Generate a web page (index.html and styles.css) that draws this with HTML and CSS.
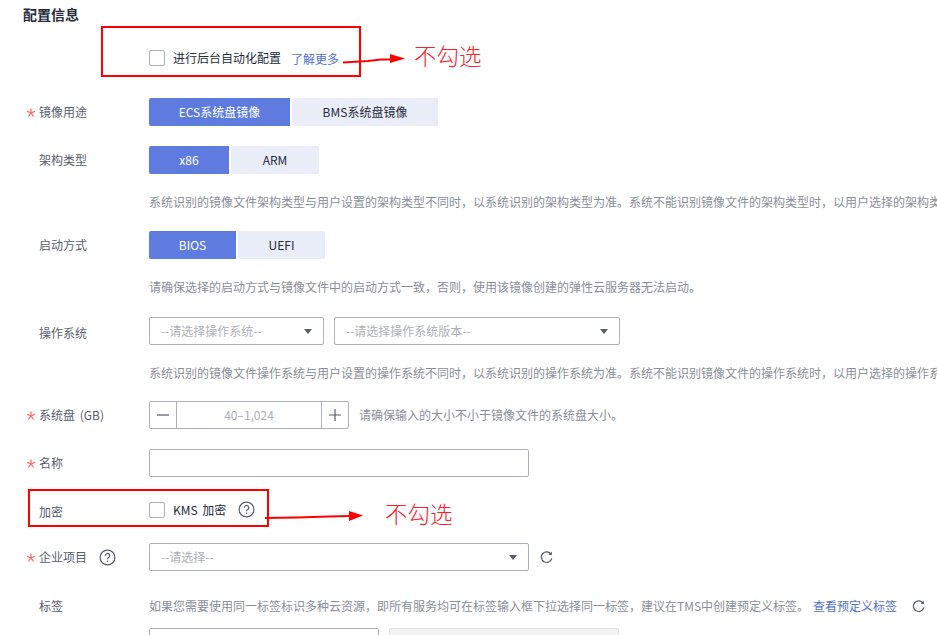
FILE: index.html
```html
<!DOCTYPE html>
<html lang="zh-CN">
<head>
<meta charset="utf-8">
<title>配置信息</title>
<link rel="stylesheet" href="styles.css">
</head>
<body>
<main class="page">
  <h2 class="title">配置信息</h2>

  <div class="row auto-row">
    <span class="label"></span>
    <span class="checkbox"></span>
    <span class="check-text">进行后台自动化配置</span>
    <a class="link learn">了解更多</a>
  </div>

  <div class="row usage-row">
    <span class="label"><span class="star"><svg width="8" height="9" viewBox="0 0 8 9"><path d="M4 4.800V.5M4 4.800L8 3.300M4 4.800L6.600 8.500M4 4.800L1.400 8.500M4 4.800L0 3.300" stroke="#fa6e6e" stroke-width="1.300" fill="none"/></svg></span>镜像用途</span>
    <div class="seg">
      <span class="seg-btn on w141">ECS系统盘镜像</span>
      <span class="seg-btn w146">BMS系统盘镜像</span>
    </div>
  </div>

  <div class="row gap20">
    <span class="label"><span class="star"></span>架构类型</span>
    <div class="seg">
      <span class="seg-btn on w80">x86</span>
      <span class="seg-btn w88">ARM</span>
    </div>
  </div>
  <p class="hint">系统识别的镜像文件架构类型与用户设置的架构类型不同时，以系统识别的架构类型为准。系统不能识别镜像文件的架构类型时，以用户选择的架构类型为准。</p>

  <div class="row gap20">
    <span class="label"><span class="star"></span>启动方式</span>
    <div class="seg">
      <span class="seg-btn on w87">BIOS</span>
      <span class="seg-btn w87">UEFI</span>
    </div>
  </div>
  <p class="hint">请确保选择的启动方式与镜像文件中的启动方式一致，否则，使用该镜像创建的弹性云服务器无法启动。</p>

  <div class="row gap21">
    <span class="label low"><span class="star"></span>操作系统</span>
    <div class="select w175"><span>--请选择操作系统--</span><b class="caret"></b></div>
    <div class="select w286 ml10"><span>--请选择操作系统版本--</span><b class="caret"></b></div>
  </div>
  <p class="hint">系统识别的镜像文件操作系统与用户设置的操作系统不同时，以系统识别的操作系统为准。系统不能识别镜像文件的操作系统时，以用户选择的操作系统为准。</p>

  <div class="row gap19">
    <span class="label wide-space"><span class="star"><svg width="8" height="9" viewBox="0 0 8 9"><path d="M4 4.800V.5M4 4.800L8 3.300M4 4.800L6.600 8.500M4 4.800L1.400 8.500M4 4.800L0 3.300" stroke="#fa6e6e" stroke-width="1.300" fill="none"/></svg></span>系统盘 (GB)</span>
    <div class="stepper">
      <span class="step">
        <svg width="14" height="14" viewBox="0 0 14 14"><path d="M1 7h12" stroke="#575d6c" stroke-width="1.200"/></svg>
      </span>
      <span class="step-value">40–1,024</span>
      <span class="step">
        <svg width="14" height="14" viewBox="0 0 14 14"><path d="M1 7h12M7 1v12" stroke="#575d6c" stroke-width="1.200"/></svg>
      </span>
    </div>
    <span class="step-note">请确保输入的大小不小于镜像文件的系统盘大小。</span>
  </div>

  <div class="row gap20">
    <span class="label"><span class="star"><svg width="8" height="9" viewBox="0 0 8 9"><path d="M4 4.800V.5M4 4.800L8 3.300M4 4.800L6.600 8.500M4 4.800L1.400 8.500M4 4.800L0 3.300" stroke="#fa6e6e" stroke-width="1.300" fill="none"/></svg></span>名称</span>
    <div class="input w380"></div>
  </div>

  <div class="row kms-row">
    <span class="label low"><span class="star"></span>加密</span>
    <span class="checkbox"></span>
    <span class="check-text wide-space">KMS 加密</span>
    <svg class="help kms-help" width="17" height="17" viewBox="0 0 17 17"><circle cx="8.500" cy="8.500" r="7.400" fill="none" stroke="#575d6c" stroke-width="1.200"/><path d="M6.300 6.700a2.200 2.200 0 1 1 3.300 1.900c-.7.4-1.100.8-1.100 1.700" fill="none" stroke="#575d6c" stroke-width="1.200"/><circle cx="8.500" cy="12.200" r=".8" fill="#575d6c"/></svg>
  </div>

  <div class="row gap23">
    <span class="label"><span class="star"><svg width="8" height="9" viewBox="0 0 8 9"><path d="M4 4.800V.5M4 4.800L8 3.300M4 4.800L6.600 8.500M4 4.800L1.400 8.500M4 4.800L0 3.300" stroke="#fa6e6e" stroke-width="1.300" fill="none"/></svg></span>企业项目<svg class="help label-help" width="17" height="17" viewBox="0 0 17 17"><circle cx="8.500" cy="8.500" r="7.400" fill="none" stroke="#575d6c" stroke-width="1.200"/><path d="M6.300 6.700a2.200 2.200 0 1 1 3.300 1.900c-.7.4-1.100.8-1.100 1.700" fill="none" stroke="#575d6c" stroke-width="1.200"/><circle cx="8.500" cy="12.200" r=".8" fill="#575d6c"/></svg></span>
    <div class="select w380"><span>--请选择--</span><b class="caret"></b></div>
    <svg class="refresh ml11" width="13" height="13" viewBox="0 0 13 13"><path d="M11.200 3.400A5.300 5.300 0 1 0 11.800 7.500" fill="none" stroke="#575d6c" stroke-width="1.200"/><path d="M8.600 3.900h3.300V.6z" fill="#575d6c"/></svg>
  </div>

  <div class="row tags-row">
    <span class="label"><span class="star"></span>标签</span>
    <span class="hint-inline">如果您需要使用同一标签标识多种云资源，即所有服务均可在标签输入框下拉选择同一标签，建议在TMS中创建预定义标签。</span>
    <a class="link tag-link">查看预定义标签</a>
    <svg class="refresh ml15" width="13" height="13" viewBox="0 0 13 13"><path d="M11.200 3.400A5.300 5.300 0 1 0 11.800 7.500" fill="none" stroke="#575d6c" stroke-width="1.200"/><path d="M8.600 3.900h3.300V.6z" fill="#575d6c"/></svg>
  </div>

  <div class="row gap13">
    <span class="label"></span>
    <div class="input w230"></div>
    <div class="input w230 ml10 disabled"></div>
  </div>
</main>

<div class="note-box box-auto"></div>
<div class="note-box box-kms"></div>
<svg class="arrows" width="937" height="635" viewBox="0 0 937 635">
  <path d="M343 62.500L368 61L381 59.500L392 59.500" fill="none" stroke="#f00" stroke-width="2"/>
  <path d="M390 54L405 58.500L390 63z" fill="#f00"/>
  <path d="M265 518L297 517.500L329 516.500L350 516" fill="none" stroke="#f00" stroke-width="2"/>
  <path d="M349 511L363 515.500L349 521z" fill="#f00"/>
</svg>
<span class="note-text text-auto">不勾选</span>
<span class="note-text text-kms">不勾选</span>
</body>
</html>
```
FILE: styles.css
```css
html, body {
  margin: 0;
  height: 635px;
  overflow: hidden;
  background: #fff;
}
body {
  position: relative;
  font: 12px/18px "Noto Sans CJK SC", "Liberation Sans", sans-serif;
  color: #575d6c;
}
.page {
  padding: 4px 0 0 27px;
}
.title {
  margin: 0 0 0 -4px;
  font-size: 14px;
  line-height: 20px;
  font-weight: 700;
  color: #252b3a;
}
.row {
  display: flex;
  align-items: center;
  white-space: nowrap;
}
.auto-row { margin-top: 26px; height: 16px; }
.usage-row { margin-top: 32px; }
.kms-row { margin-top: 23px; height: 20px; }
.tags-row { margin-top: 26px; height: 18px; }
.gap13 { margin-top: 13px; }
.gap19 { margin-top: 19px; }
.gap20 { margin-top: 20px; }
.gap21 { margin-top: 21px; }
.gap23 { margin-top: 23px; }
.ml10 { margin-left: 10px; }
.ml11 { margin-left: 11px; }
.ml15 { margin-left: 15px; }
.wide-space { word-spacing: 2px; white-space: pre; }

.label {
  display: flex;
  align-items: center;
  flex: none;
  width: 122px;
}
.label.low { position: relative; top: 2px; }
.star {
  display: flex;
  align-items: center;
  flex: none;
  width: 12px;
  height: 18px;
}
.help { flex: none; }
.label-help { margin-left: 12px; }
.kms-help { margin: -2px 0 0 12px; }

.checkbox {
  flex: none;
  box-sizing: border-box;
  width: 16px;
  height: 16px;
  border: 1px solid #adb0b8;
  border-radius: 2px;
  background: #fff;
}
.check-text {
  margin-left: 8px;
  color: #252b3a;
}
.link { color: #526ecc; }
.learn { margin-left: 10px; position: relative; top: 1px; }
.tag-link { margin-left: 4px; }

.seg { display: flex; gap: 2px; }
.seg-btn {
  box-sizing: border-box;
  height: 28px;
  line-height: 28px;
  text-align: center;
  background: #e9edf8;
  color: #252b3a;
}
.seg-btn:first-child { border-radius: 2px 0 0 2px; }
.seg-btn:last-child { border-radius: 0 2px 2px 0; }
.seg-btn.on { background: #5e7ce0; color: #fff; }
.w80 { width: 80px; }
.w87 { width: 87px; }
.w88 { width: 88px; }
.w141 { width: 141px; }
.w146 { width: 146px; }
.w175 { width: 175px; }
.w230 { width: 230px; }
.w286 { width: 286px; }
.w380 { width: 380px; }

.hint {
  margin: 19px 0 0 122px;
  width: 788px;
  overflow: hidden;
  white-space: nowrap;
  color: #8a8e99;
}
.hint-inline { color: #8a8e99; }

.select, .input {
  box-sizing: border-box;
  flex: none;
  height: 28px;
  border: 1px solid #adb0b8;
  border-radius: 2px;
  background: #fff;
}
.select {
  display: flex;
  align-items: center;
  justify-content: space-between;
  padding: 0 11px;
  color: #adb0b8;
}
.input.disabled {
  background: #f3f3f5;
  border-color: #dfe1e6;
}
.caret {
  width: 0;
  height: 0;
  border-left: 4px solid transparent;
  border-right: 4px solid transparent;
  border-top: 5px solid #575d6c;
}

.stepper {
  display: flex;
  flex: none;
  box-sizing: border-box;
  width: 200px;
  height: 28px;
  border: 1px solid #adb0b8;
  border-radius: 2px;
}
.step {
  display: flex;
  align-items: center;
  justify-content: center;
  flex: none;
  width: 26px;
}
.step-value {
  flex: 1;
  line-height: 26px;
  text-align: center;
  color: #adb0b8;
  border-left: 1px solid #adb0b8;
  border-right: 1px solid #adb0b8;
}
.step-note { margin-left: 10px; color: #8a8e99; }

.note-box {
  position: absolute;
  box-sizing: border-box;
  border: 2px solid #f00;
}
.box-auto { left: 101px; top: 26px; width: 260px; height: 51px; }
.box-kms { left: 28px; top: 489px; width: 241px; height: 38px; }
.arrows { position: absolute; left: 0; top: 0; pointer-events: none; }
.note-text {
  position: absolute;
  font-size: 22.5px;
  line-height: 30px;
  font-weight: 300;
  color: #f5222d;
}
.text-auto { left: 414px; top: 40px; }
.text-kms { left: 385px; top: 498px; }
```
